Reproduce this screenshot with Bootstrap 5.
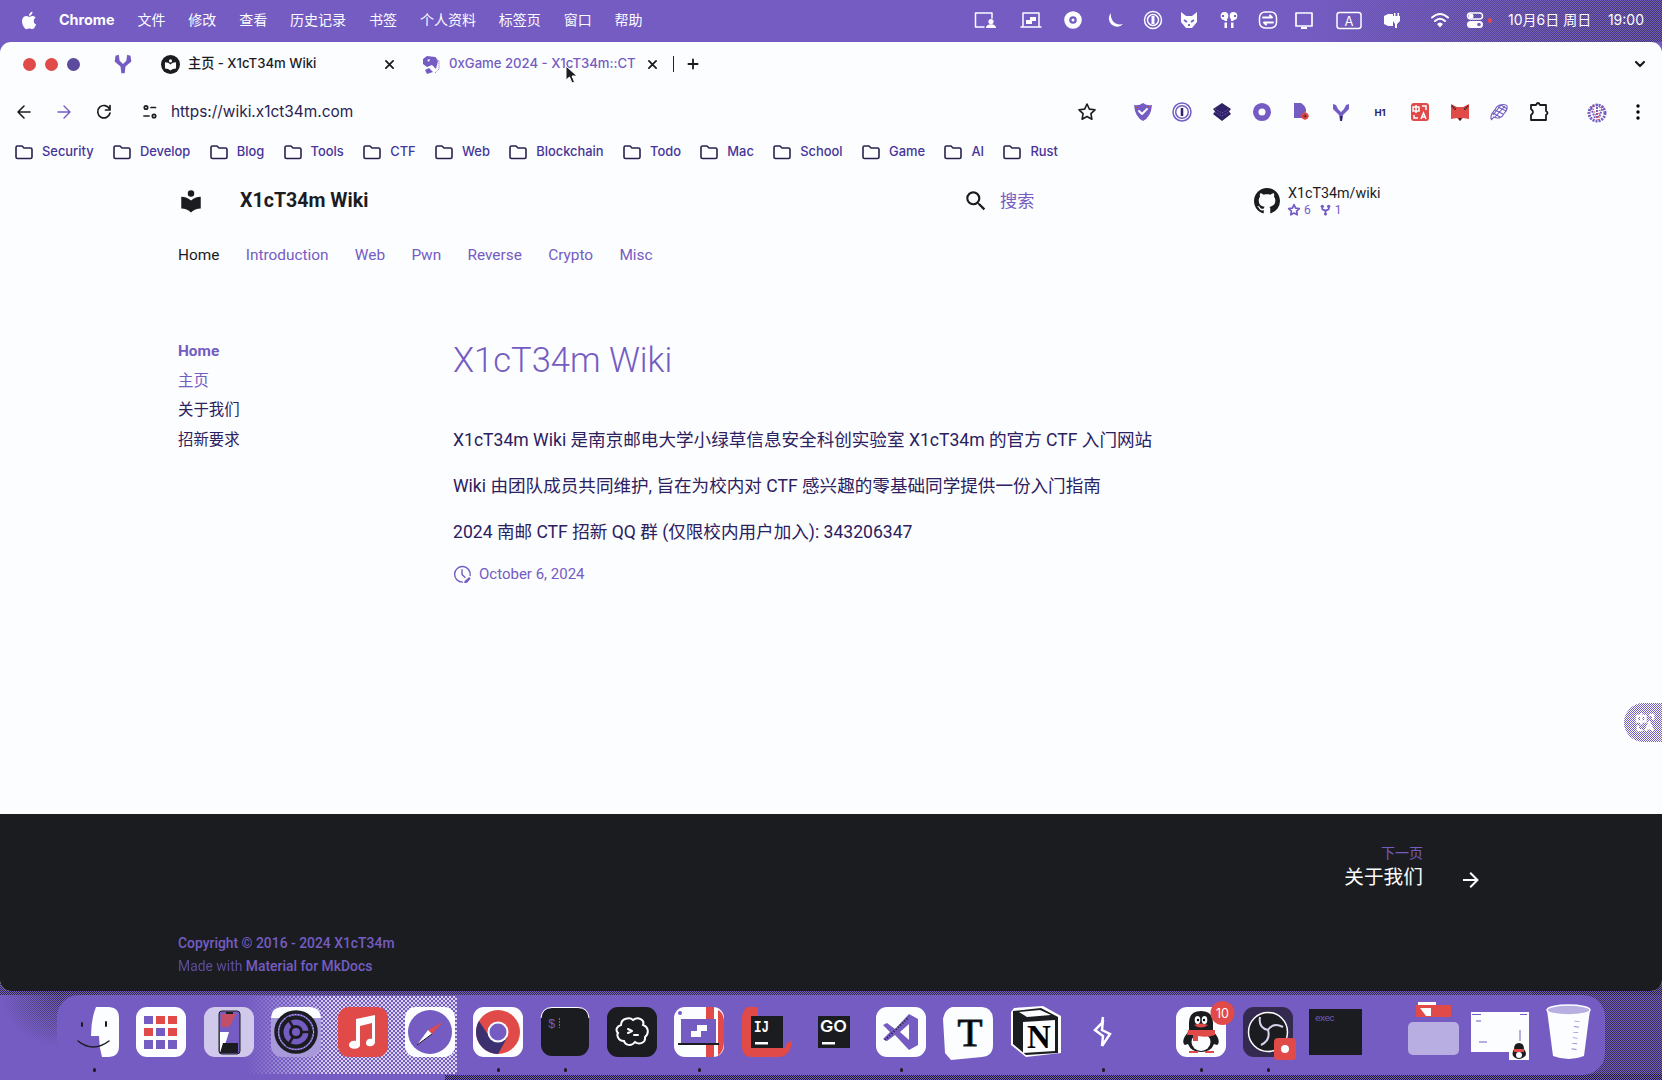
<!DOCTYPE html>
<html lang="zh-CN">
<head>
<meta charset="utf-8">
<meta name="viewport" content="width=device-width, initial-scale=1">
<title>X1cT34m Wiki</title>
<link href="https://cdn.jsdelivr.net/npm/bootstrap@5.3.0/dist/css/bootstrap.min.css" rel="stylesheet">
<style>
:root{--paper:#fcfdff;--violet:#745cc2;--ink:#1b1c1f;--navy:#2f2266;--coral:#e04a48;
 --ui:Inter,"Noto Sans CJK SC",sans-serif;--doc:Roboto,"Noto Sans CJK SC",sans-serif;
 --checker:conic-gradient(var(--ink) 25%,transparent 0 50%,var(--ink) 0 75%,transparent 0)}
body{width:1662px;height:1080px;overflow:hidden;background:var(--violet);color:var(--ink);font-family:var(--ui);line-height:1}
svg{display:block;flex:none;overflow:visible}
a{color:inherit;text-decoration:none}
.ln{fill:none;stroke:currentColor;stroke-width:2;stroke-linecap:round;stroke-linejoin:round}
.desk{height:1080px;position:relative}
.grain{position:absolute;background:var(--checker) 0 0/4px 4px;pointer-events:none}
.grain-top{right:0;top:0;width:440px;height:42px;-webkit-mask:linear-gradient(100deg,transparent 20%,#0009);mask:linear-gradient(100deg,transparent 20%,#0009);background-size:2px 2px}
.grain-strip{left:0;right:0;bottom:85px;height:14px;background-size:2px 2px;opacity:.75}
.grain-left{left:0;top:991px;width:100px;height:62px;background-size:2px 2px;-webkit-mask:radial-gradient(60px 50px at 62px 6px,#000b,transparent);mask:radial-gradient(60px 50px at 62px 6px,#000b,transparent)}
.grain-right{right:0;top:985px;width:130px;height:95px;background-size:2px 2px;opacity:.7}
.grain-base{left:445px;right:0;top:1074px;height:6px;background-size:2px 2px}
/* menu bar */
.menubar{height:42px;color:var(--paper);font-size:14px;padding:0 18px 2px 20px;position:relative}
.menubar .items{gap:22.9px}
.menubar .app{font-weight:700;margin-left:-3px;font-size:14.4px}
.stat{margin-left:1px}
.stat svg{width:24px;height:24px}
.stat :nth-child(2){margin-left:22px}.stat :nth-child(3),.stat :nth-child(4){margin-left:18px}
.stat :nth-child(5){margin-left:14px}.stat :nth-child(6){margin-left:12px}.stat :nth-child(7){margin-left:16px}
.stat :nth-child(8){margin-left:14.5px}.stat :nth-child(9){margin-left:12.5px}.stat :nth-child(10){margin-left:21px}
.stat :nth-child(11){margin-left:19px}.stat :nth-child(12){margin-left:24px}.stat :nth-child(13){margin-left:11px}
.stat svg *{margin:0!important}
.rec{width:4px;height:5px;border-radius:2px;background:var(--coral);margin-left:1px}
.clock{margin-left:16px;width:136px;font-size:14px;white-space:nowrap}
/* browser window */
.win{height:949px;border-radius:11px;overflow:hidden;background:var(--paper);position:relative}
.tabs{height:44px;padding:0 10px 0 23px;font-size:13.15px;font-weight:500}
.lamp{width:13px;height:13px;border-radius:50%;background:var(--coral);margin-right:9px}
.lamp-off{background:#5c4a9d}
.tab1{width:228px}.tab2{width:210px;margin-left:28px;color:var(--violet)}
.tablabel{white-space:nowrap}
.tab2 .tablabel{padding-left:1px}
.bar{height:52px;padding:0 12px 1px}
.url{font-size:15.4px;margin-left:9px;color:#2b2351}
.ext{gap:15.6px}
.face{margin-left:18px}
.marks{height:30px;padding:0 0 2px 15px;gap:19.4px;font-size:12.9px;font-weight:500;color:#46359a}
.marks a{display:flex;align-items:center;gap:9px;white-space:nowrap}
.marks svg{color:#29204d}
.pointer{position:absolute;left:565px;top:23px}
/* wiki page */
.doc{font-family:var(--doc);line-height:1.6}
.head{height:66px;padding-left:178px}
.sitename{font-size:19.6px;font-weight:700;margin-left:36px;width:723px;line-height:1}
.hunt{font-size:17.2px;color:var(--violet);margin-left:11px;width:230px;padding-top:2px}
.repo{font-size:14.3px;line-height:17px}
.facts{font-size:12px;color:var(--violet);gap:9px;line-height:16px}
.sections{height:42px;padding-left:178px;gap:26.3px;font-size:15.4px;color:var(--violet)}
.sections .on{color:var(--ink)}
.cols{height:538px}
.side{width:453px;padding:60px 0 0 178px;font-size:15.4px;color:#2b2060}
.side li{height:29.9px;display:flex;align-items:center}
.cur{color:var(--violet)}
.main{padding-top:55px;font-size:17.58px;color:#2b2060}
.main h1{font-size:34.5px;font-weight:300;color:var(--violet);line-height:46px;margin:6px 0 43px}
.main p{line-height:28px;margin:0 0 18px;white-space:nowrap}
.stamp{font-size:15px;color:var(--violet);gap:7px;line-height:20px}
.foot{background:var(--ink);color:var(--violet);height:177px;padding:26px 179px 0 178px}
.next{height:52px;gap:36px}
.next small{font-size:14px;line-height:24px}
.next strong{font-size:19.7px;font-weight:400;color:var(--paper);line-height:26px}
.next svg{margin-top:27px}
.legal{font-size:13.9px;line-height:22.5px;padding-top:40px}
.fab{position:absolute;right:0;top:661px;width:38px;height:39px;border-radius:20px 0 0 20px;background:conic-gradient(var(--violet) 25%,var(--paper) 0 50%,var(--violet) 0 75%,var(--paper) 0) 0 0/2px 2px}
/* dock */
.dock{position:relative;margin:4px 57px 0;height:80px;border-radius:22px;background:var(--violet);padding:12px 0 0 12px;gap:17.27px}
.dock>*{position:relative}
.dock::before{content:"";position:absolute;left:190px;top:1px;width:210px;height:78px;background:conic-gradient(#fff 25%,transparent 0 50%,#fff 0 75%,transparent 0) 0 0/4px 4px;-webkit-mask:linear-gradient(90deg,transparent,#000b 40%);mask:linear-gradient(90deg,transparent,#000b 40%)}
.gap-after{margin-right:30.5px}
.live::after{content:"";position:absolute;left:24px;top:61px;width:3px;height:4px;border-radius:2px;background:var(--ink)}
svg text{font-family:Inter,sans-serif}
</style>
</head>
<body>
<div class="desk">
<div class="grain grain-top"></div><div class="grain grain-strip"></div><div class="grain grain-left"></div><div class="grain grain-right"></div><div class="grain grain-base"></div>

<nav class="menubar d-flex align-items-center justify-content-between">
 <div class="items d-flex align-items-center">
  <svg width="19" height="19" viewBox="2 1 21 22" fill="currentColor"><path d="M18.71 19.5c-.83 1.24-1.71 2.45-3.05 2.47-1.34.03-1.77-.79-3.29-.79-1.53 0-2 .77-3.27.82-1.31.05-2.3-1.32-3.14-2.53C4.25 17 2.94 12.45 4.7 9.39c.87-1.52 2.43-2.48 4.12-2.51 1.28-.02 2.5.87 3.29.87.78 0 2.26-1.07 3.81-.91.65.03 2.47.26 3.64 1.98-.09.06-2.17 1.28-2.15 3.81.03 3.02 2.65 4.03 2.68 4.04-.03.07-.42 1.44-1.38 2.83M13 3.5c.73-.83 1.94-1.46 2.94-1.5.13 1.17-.34 2.35-1.04 3.19-.69.85-1.83 1.51-2.95 1.42-.15-1.15.41-2.35 1.05-3.11z"/></svg>
  <span class="app">Chrome</span><span>文件</span><span>修改</span><span>查看</span><span>历史记录</span><span>书签</span><span>个人资料</span><span>标签页</span><span>窗口</span><span>帮助</span>
 </div>
 <div class="d-flex align-items-center">
  <div class="stat d-flex align-items-center">
   <svg viewBox="0 0 24 24"><path class="ln" style="stroke-width:1.5" d="M11 19H2.500V5H19v5"/><circle cx="18" cy="13.500" r="2.600" fill="currentColor"/><path fill="currentColor" d="M13 20c0-5 10-5 10 0z"/></svg>
   <svg viewBox="0 0 24 24"><path class="ln" style="stroke-width:1.5" d="M4 18V5h16v13M2 19h20"/><path fill="currentColor" d="M7 16v-4h4V9h6v4h-4v3z"/></svg>
   <svg viewBox="0 0 24 24"><circle cx="12" cy="12" r="6.300" fill="none" stroke="currentColor" stroke-width="5"/><circle cx="12" cy="12" r="1.500" fill="currentColor"/></svg>
   <svg viewBox="0 0 24 24"><path fill="currentColor" d="M8 5a8 8 0 1 0 12 11C12 18 7 12 8 5z"/></svg>
   <svg viewBox="0 0 24 24" fill="none" stroke="currentColor" stroke-width="1.500"><circle cx="12" cy="12" r="8.500"/><circle cx="12" cy="12" r="5.500"/><path stroke-width="3" d="M12 8v8"/></svg>
   <svg viewBox="0 0 24 24"><path fill="currentColor" d="M4 4l5 4h6l5-4v10l-5 6H9l-5-6z"/><path stroke="#745cc2" stroke-width="1.800" d="M7 12l3 2m7-2-3 2m-2 2v2"/></svg>
   <svg viewBox="0 0 24 24" fill="currentColor"><ellipse cx="7.500" cy="8" rx="3.800" ry="4"/><ellipse cx="16.500" cy="8" rx="3.800" ry="4"/><path d="M7.500 10h2.500v10H7.500zM14 10h2.500v10H14z"/><path fill="#745cc2" d="M5 7h2v2H5zM17 7h2v2h-2zM7 13h3v1.500H7zM14 13h3v1.500h-3z"/></svg>
   <svg viewBox="0 0 24 24" class="ln"><rect x="3.500" y="4" width="17" height="16" rx="5.500" stroke-width="1.500"/><path d="M7 9.500h9l-2-2M17 14.500H8l2 2"/></svg>
   <svg viewBox="0 0 24 24"><path class="ln" style="stroke-width:1.7" d="M4 5h16v13H4z"/><path fill="currentColor" d="M9 19h6v2H9z"/></svg>
   <svg viewBox="0 0 24 24"><rect x="0" y="4.500" width="24" height="16" rx="2.500" fill="none" stroke="currentColor" stroke-width="1.500"/><text x="12" y="17.500" font-size="13" text-anchor="middle" fill="currentColor">A</text></svg>
   <svg viewBox="0 0 24 24" fill="currentColor"><path d="M4 8l4-2v12l-4-2zM8 6h5v12H8z"/><path d="M14 5h1.500v3h2V5H19v3h1v5l-3 3v4h-2v-4l-2-3V8h1z"/></svg>
   <svg viewBox="0 0 24 24"><path class="ln" d="M4 9.500q8-7 16 0M7 13q5-4.500 10 0"/><path fill="currentColor" d="M9 16q3-3 6 0l-3 3.500z"/></svg>
   <svg viewBox="0 0 24 24"><rect x="4.500" y="5" width="15" height="6" rx="3" fill="none" stroke="currentColor" stroke-width="1.500"/><circle cx="8" cy="8" r="2.500" fill="currentColor"/><rect x="4" y="13" width="16" height="7" rx="3.500" fill="currentColor"/><circle cx="16" cy="16.500" r="1.800" fill="#745cc2"/></svg>
  </div>
  <i class="rec"></i>
  <div class="clock d-flex justify-content-between"><span>10月6日 周日</span><span>19:00</span></div>
 </div>
</nav>

<main class="win">
 <div class="tabs d-flex align-items-center">
  <i class="lamp"></i><i class="lamp"></i><i class="lamp lamp-off"></i>
  <svg class="ms-4" width="20" height="20" viewBox="0 0 24 24"><path fill="#745cc2" d="M3 2l4-1 1 7 4 4 4-4 1-7 4 1 1 7-7 6-1 8h-4l-1-8-7-6z"/></svg>
  <div class="tab1 d-flex align-items-center ms-4 ps-1">
   <svg width="19" height="19" viewBox="0 0 24 24"><circle cx="12" cy="12" r="12" fill="#1b1c1f"/><circle cx="12" cy="7.500" r="2" fill="#fcfdff"/><path fill="#fcfdff" d="M5 9c3 0 5 1 7 3 2-2 4-3 7-3v8c-3 0-5 1-7 2.500C10 18 8 17 5 17z"/></svg>
   <span class="tablabel ms-2">主页 - X1cT34m Wiki</span>
  </div>
  <svg width="9" height="9" viewBox="0 0 10 10" class="ln"><path d="M1 1l8 8M9 1L1 9"/></svg>
  <div class="tab2 d-flex align-items-center">
   <svg width="18" height="19" viewBox="0 0 18 19"><path fill="#745cc2" d="M1 4l4-3 8 1 3 4-2 8-4-4-5 2-4-3zM3 15l4-2 4 4-6 2z"/><path fill="none" stroke="#745cc2" stroke-dasharray="1 1" d="M13 2l4 4v8l-4 4"/><path fill="#fcfdff" d="M5 5l3-1-1 3z"/></svg>
   <span class="tablabel ms-2">0xGame 2024 - X1cT34m::CT</span>
  </div>
  <svg class="ms-3" width="9" height="9" viewBox="0 0 10 10"><path class="ln" d="M1 1l8 8M9 1L1 9"/></svg>
  <span class="ms-3 border-start border-dark" style="height:16px"></span>
  <svg class="ms-2" width="22" height="24" viewBox="0 0 24 24"><path class="ln" stroke="#2f2266" d="M7 12h10M12 7v10"/></svg>
  <svg class="ms-auto" width="24" height="24" viewBox="0 0 24 24"><path class="ln" style="stroke-width:2.200" d="M8 10l4 4 4-4"/></svg>
  <svg class="pointer" width="13" height="20" viewBox="0 0 13 20"><path fill="#1b1c1f" stroke="#fcfdff" d="M1 1v14l3.500-3 2.500 6 2.500-1-2.500-6h5z"/></svg>
 </div>
 <div class="bar d-flex align-items-center">
  <svg width="24" height="24" viewBox="0 0 24 24"><path class="ln" style="stroke-width:1.600" d="M18 12H6.500M12 6l-6 6 6 6"/></svg>
  <svg class="ms-3" width="24" height="24" viewBox="0 0 24 24" color="#745cc2"><path class="ln" style="stroke-width:1.400" d="M6 12h12M12 6l6 6-6 6"/></svg>
  <svg class="ms-3" width="24" height="24" viewBox="0 0 24 24"><path class="ln" style="stroke-width:1.700" d="M17.500 9A6.200 6.200 0 1 0 18 13M18 5.500V10h-4.500"/></svg>
  <svg style="margin-left:22px" width="24" height="24" viewBox="0 0 24 24"><path class="ln" style="stroke-width:1.700" d="M13 7.500h4.500M6 16h5"/><circle class="ln" style="stroke-width:1.700" cx="8" cy="7.500" r="1.700"/><circle class="ln" style="stroke-width:1.700" cx="16" cy="16" r="1.700"/></svg>
  <span class="url">https://wiki.x1ct34m.com</span>
  <div class="ext d-flex align-items-center ms-auto">
   <svg class="me-3 " width="24" height="24" viewBox="0 0 24 24"><path class="ln" style="stroke-width:1.600" d="M12 4l2.400 5.100 5.600.7-4.100 3.900 1 5.500-4.900-2.700-4.900 2.700 1-5.500L4 9.800l5.600-.7z"/></svg>
   <svg width="24" height="24" viewBox="0 0 24 24"><path fill="#745cc2" d="M3 5q5 1 9-2 4 3 9 2-1 12-9 16Q4 17 3 5z"/><path d="M5 8l2-2m10 0 2 2" stroke="#e04a48"/><path class="ln" color="#fcfdff" d="M8 11l3 3 5-5"/></svg>
   <svg width="24" height="24" viewBox="0 0 24 24" fill="none" stroke="#745cc2"><circle cx="12" cy="12" r="9" stroke-width="1.500"/><circle cx="12" cy="12" r="6.300" stroke-width="1.500"/><path stroke="#2f2266" stroke-width="2.500" d="M12 8v8"/></svg>
   <svg width="24" height="24" viewBox="0 0 24 24"><path fill="#2f2266" d="M12 3l9 6-2 2.500 2 2.500-9 7-9-7 2-2.500L3 9z"/><path stroke="#745cc2" fill="none" stroke-dasharray="1 1" d="M5 12l7 4 7-4M5 9l7 4 7-4"/></svg>
   <svg width="24" height="24" viewBox="0 0 24 24"><circle cx="12" cy="12" r="6.300" fill="none" stroke="#745cc2" stroke-width="5.500"/></svg>
   <svg width="24" height="24" viewBox="0 0 24 24"><path fill="#745cc2" d="M5 3h7q5 3 5 8l-2 7H5z"/><circle cx="16" cy="16" r="3.500" fill="#e04a48"/><circle cx="16" cy="16" r="1.500" fill="#1b1c1f"/><path stroke="#e04a48" stroke-dasharray="1 1" d="M11 16h10M16 11v10"/></svg>
   <svg width="24" height="24" viewBox="0 0 24 24"><path fill="#745cc2" d="M4 4l3 1 2 4 3 3 3-3 2-4 3-1v5l-6 6-1 6h-2l-1-6-6-6z"/><path fill="#2f2266" d="M11 16h2.500l-.5 5h-1.500z"/></svg>
   <svg width="24" height="24" viewBox="0 0 24 24"><text x="12" y="16" font-size="9.500" font-weight="700" text-anchor="middle" fill="#2f2266">H1</text></svg>
   <svg width="24" height="24" viewBox="0 0 24 24"><rect x="3" y="3" width="18" height="18" rx="3" fill="#e04a48"/><path stroke="#fcfdff" stroke-width="1.500" fill="none" d="M5 7h6v4H5zM8 5v8M14 6h4v4M6 15v3h4M13 19l2.500-6 2.500 6M14 17h3"/></svg>
   <svg width="24" height="24" viewBox="0 0 24 24"><path fill="#e04a48" d="M3 4l6 3h6l6-3v15l-6-1-3 3-3-3-6 1z"/><path stroke="#1b1c1f" stroke-dasharray="1 1" stroke-width="2" d="M4 6l4 4M20 6l-4 4"/><path fill="#1b1c1f" d="M10.500 18h3l-1.500 3z"/></svg>
   <svg width="24" height="24" viewBox="0 0 24 24" fill="none" stroke="#745cc2" stroke-width="1.100"><path d="M4 19c-1-6 4-8 5-11s9-5 11-2c1 6-3 6-4 9s-6 4-9 2l-3 3M6 13l7 4M8 10l8 4M11 7l8 4M14 5l6 4M8 17l10-11M6 15L14 5"/></svg>
   <svg width="24" height="24" viewBox="0 0 24 24"><path class="ln" style="stroke-width:1.800" d="M4 5h5q2-4 4 0h6v6q3 2 0 4v5H4v-5q4-3 0-6z"/></svg>
   <svg class="face" width="26" height="24" viewBox="0 0 24 24"><circle cx="12" cy="13" r="8" fill="none" stroke="#745cc2" stroke-width="3" stroke-dasharray="2 1"/><path stroke="#745cc2" stroke-width="2" stroke-dasharray="2 1" d="M6 8l4 10M12 4v14M18 6l-4 12"/><path stroke="#e04a48" stroke-width="1.500" stroke-dasharray="1 2" d="M7 6l5 12M15 7l-2 13"/></svg>
   <svg width="24" height="24" viewBox="0 0 24 24"><circle cx="12" cy="6" r="1.700"/><circle cx="12" cy="12" r="1.700"/><circle cx="12" cy="18" r="1.700"/></svg>
  </div>
 </div>
 <svg width="0" height="0" class="position-absolute"><symbol id="dir" viewBox="0 0 18 15"><path fill="none" stroke="currentColor" stroke-width="1.600" stroke-linejoin="round" d="M1 2.500V12q0 1.500 1.500 1.500h13q1.500 0 1.500-1.500V4.500Q17 3 15.500 3H9L7 1H2.500Q1 1 1 2.500z"/></symbol></svg>
 <div class="marks d-flex align-items-center">
  <a href="#"><svg width="18" height="15"><use href="#dir"/></svg>Security</a><a href="#"><svg width="18" height="15"><use href="#dir"/></svg>Develop</a><a href="#"><svg width="18" height="15"><use href="#dir"/></svg>Blog</a><a href="#"><svg width="18" height="15"><use href="#dir"/></svg>Tools</a><a href="#"><svg width="18" height="15"><use href="#dir"/></svg>CTF</a><a href="#"><svg width="18" height="15"><use href="#dir"/></svg>Web</a><a href="#"><svg width="18" height="15"><use href="#dir"/></svg>Blockchain</a><a href="#"><svg width="18" height="15"><use href="#dir"/></svg>Todo</a><a href="#"><svg width="18" height="15"><use href="#dir"/></svg>Mac</a><a href="#"><svg width="18" height="15"><use href="#dir"/></svg>School</a><a href="#"><svg width="18" height="15"><use href="#dir"/></svg>Game</a><a href="#"><svg width="18" height="15"><use href="#dir"/></svg>AI</a><a href="#"><svg width="18" height="15"><use href="#dir"/></svg>Rust</a>
 </div>

 <div class="doc">
  <header class="head d-flex align-items-center">
   <svg width="26" height="26" viewBox="0 0 24 24" fill="#1b1c1f"><path d="M12 8a3 3 0 0 0 3-3 3 3 0 0 0-3-3 3 3 0 0 0-3 3 3 3 0 0 0 3 3m0 3.540C9.640 9.350 6.500 8 3 8v11c3.500 0 6.640 1.350 9 3.540 2.360-2.190 5.500-3.540 9-3.540V8c-3.500 0-6.640 1.350-9 3.540z"/></svg>
   <div class="sitename">X1cT34m Wiki</div>
   <svg width="26" height="26" viewBox="0 0 24 24" fill="#1b1c1f"><path d="M9.500 3A6.500 6.500 0 0 1 16 9.500c0 1.610-.59 3.090-1.560 4.230l.27.27h.79l5 5-1.500 1.500-5-5v-.79l-.27-.27A6.516 6.516 0 0 1 9.500 16 6.500 6.500 0 0 1 3 9.500 6.500 6.500 0 0 1 9.500 3m0 2C7 5 5 7 5 9.500S7 14 9.500 14 14 12 14 9.500 12 5 9.500 5z"/></svg>
   <div class="hunt">搜索</div>
   <svg class="ms-4" width="26" height="26" viewBox="0 0 16 16" fill="#1b1c1f"><path d="M8 0C3.580 0 0 3.580 0 8c0 3.540 2.290 6.530 5.470 7.590.4.070.55-.17.55-.38 0-.19-.01-.82-.01-1.490-2.010.37-2.530-.49-2.690-.94-.09-.23-.48-.94-.82-1.130-.28-.15-.68-.52-.01-.53.63-.01 1.080.58 1.230.82.72 1.210 1.870.87 2.330.66.07-.52.28-.87.51-1.070-1.780-.2-3.640-.89-3.640-3.950 0-.87.31-1.590.82-2.150-.08-.2-.36-1.020.08-2.120 0 0 .67-.21 2.200.82.64-.18 1.320-.27 2-.27.68 0 1.360.09 2 .27 1.530-1.040 2.200-.82 2.200-.82.44 1.100.16 1.920.08 2.120.51.56.82 1.270.82 2.150 0 3.070-1.870 3.750-3.650 3.950.29.25.54.73.54 1.480 0 1.070-.01 1.930-.01 2.200 0 .21.15.46.55.38A8.013 8.013 0 0 0 16 8c0-4.420-3.580-8-8-8z"/></svg>
   <div class="repo ms-2">X1cT34m/wiki
    <div class="facts d-flex">
     <span class="d-flex align-items-center"><svg class="me-1" width="12" height="12" viewBox="3 3 18 18"><path class="ln" style="stroke-width:2.500" d="M12 4l2.400 5.100 5.600.7-4.100 3.900 1 5.500-4.900-2.700-4.900 2.700 1-5.500L4 9.800l5.600-.7z"/></svg>6</span>
     <span class="d-flex align-items-center"><svg class="me-1" width="11" height="12" viewBox="0 0 12 12"><path class="ln" d="M2.500 3v2L6 7l3.500-2V3M6 7v3"/><circle cx="2.500" cy="2" r="1.800" fill="currentColor"/><circle cx="9.500" cy="2" r="1.800" fill="currentColor"/><circle cx="6" cy="10.500" r="1.500" fill="currentColor"/></svg>1</span>
    </div>
   </div>
  </header>
  <nav class="sections d-flex align-items-center"><a class="on" href="#">Home</a><a href="#">Introduction</a><a href="#">Web</a><a href="#">Pwn</a><a href="#">Reverse</a><a href="#">Crypto</a><a href="#">Misc</a></nav>
  <div class="cols d-flex">
   <ul class="side list-unstyled mb-0"><li class="cur fw-bold">Home</li><li class="cur">主页</li><li>关于我们</li><li>招新要求</li></ul>
   <article class="main">
    <h1>X1cT34m Wiki</h1>
    <p>X1cT34m Wiki 是南京邮电大学小绿草信息安全科创实验室 X1cT34m 的官方 CTF 入门网站</p>
    <p>Wiki 由团队成员共同维护, 旨在为校内对 CTF 感兴趣的零基础同学提供一份入门指南</p>
    <p>2024 南邮 CTF 招新 QQ 群 (仅限校内用户加入): 343206347</p>
    <div class="stamp d-flex align-items-center"><svg width="19" height="19" viewBox="0 0 20 20"><path class="ln" style="stroke-width:1.500" d="M10 18A8.200 8.200 0 1 1 18 11M9.500 5v5l3 3"/><path fill="currentColor" d="M12 19v-2l5-4.500 1.500 2-4 4.500z"/></svg>October 6, 2024</div>
   </article>
  </div>
  <footer class="foot">
   <div class="next d-flex justify-content-end align-items-center">
    <div class="d-flex flex-column align-items-end"><small>下一页</small><strong>关于我们</strong></div>
    <svg width="24" height="24" viewBox="0 0 24 24"><path fill="#fcfdff" d="M4 11v2h12l-5.500 5.500 1.420 1.420L19.840 12l-7.920-7.920L10.500 5.500 16 11H4z"/></svg>
   </div>
   <div class="legal"><div class="fw-medium">Copyright © 2016 - 2024 X1cT34m</div><div><span class="opacity-75">Made with</span> <a class="fw-medium" href="#">Material for MkDocs</a></div></div>
  </footer>
 </div>
 <div class="fab d-flex align-items-center ps-2"><svg class="ms-1" width="19" height="19" viewBox="0 0 20 20"><path fill="none" stroke="#fcfdff" stroke-width="2.500" d="M1 3h9v6H1zM5.500 0v12M14 2h4v5M2 13v5h5M10 19l4-9 4 9M11 16h6"/></svg></div>
</main>

<div class="dock d-flex align-items-start">
 <div class="live"><svg width="50" height="50"><path fill="#fcfdff" d="M27 0h12q11 0 11 11v28q0 11-11 11h-6q-3-10-3-21h-8q0-17 5-29z"/><path d="M13 16v3M37 15v4" class="ln"/><path d="M9 34q15 12 31 0" class="ln" style="stroke-width:1.500"/></svg></div>
 <div><svg width="50" height="50"><rect width="50" height="50" rx="11" fill="#fcfdff"/><g fill="#745cc2"><path d="M8 9h9v8H8zM20 21h9v8h-9zM8 33h9v9H8zM20 33h9v9h-9zM32 33h9v9h-9z"/><path fill="#e04a48" d="M20 9h9v8h-9zM32 9h9v8h-9zM8 21h9v8H8zM32 21h9v8h-9z"/></g></svg></div>
 <div><svg width="50" height="50"><rect width="50" height="50" rx="11" fill="#fcfdff" opacity=".68"/><rect x="15" y="4" width="21" height="43" rx="3" fill="#745cc2" stroke="#1b1c1f"/><path fill="#e04a48" opacity=".75" d="M17 7h15l-7 13h-8z"/><path fill="#fcfdff" d="M16 25h9l-6 19-3 2z"/><path fill="#1b1c1f" d="M22 5h7v2h-7zM19 36h15v10H16z"/></svg></div>
 <div><svg width="50" height="50"><rect width="50" height="50" rx="11" fill="#a799da"/><path fill="#fcfdff" d="M11 0h28q10 0 11 11H0Q1 0 11 0z"/><g fill="none" stroke="#1b1c1f"><circle cx="25" cy="25" r="20" stroke-width="3.500" fill="#745cc2"/><circle cx="25" cy="25" r="14.500" stroke-width="4"/><circle cx="25" cy="25" r="5.500" stroke-width="3"/><path stroke-width="2.500" d="M30 25h12M22 20L16 10M22 30l-6 10"/></g><circle cx="25" cy="25" r="17.500" fill="none" stroke="#d5cdf0" stroke-dasharray="1 2"/></svg></div>
 <div><svg width="50" height="50"><rect width="50" height="50" rx="11" fill="#e04a48"/><path fill="#fcfdff" d="M18 12l19-4v27c0 5-9 6-9 1 0-4 4-5 6-4V16l-12 3v19c0 5-11 5-11 0 0-4 5-5 7-4z"/></svg></div>
 <div><svg width="50" height="50"><rect width="50" height="50" rx="11" fill="#fcfdff"/><circle cx="25" cy="25" r="22" fill="#745cc2"/><path d="M38 15L23 23l4 4z" fill="#e04a48"/><path d="M12 38l11-15 4 4z" fill="#fcfdff"/><path d="M12 38l15-11" stroke="#1b1c1f"/></svg></div>
 <div class="live"><svg width="50" height="50"><rect width="50" height="50" rx="11" fill="#fcfdff"/><circle cx="25" cy="25" r="22" fill="#e04a48"/><path fill="#3c3071" d="M6 14A22 22 0 0 0 25 47l9-16-18-2z"/><circle cx="25" cy="25" r="10.500" fill="#fcfdff"/><circle cx="25" cy="25" r="8.500" fill="#745cc2"/></svg></div>
 <div class="live"><svg width="50" height="50"><rect x="1" y="1" width="48" height="48" rx="11" fill="#1b1c1f"/><path d="M1 11Q2 .5 12 .5h26Q48 .5 49 11" stroke="#fcfdff" fill="none"/><text x="8" y="21" font-size="12.500" fill="#745cc2" style="font-family:'Liberation Mono'">$</text><path d="M19.500 11v10" stroke="#745cc2" stroke-dasharray="2 1"/></svg></div>
 <div><svg width="50" height="50"><rect width="50" height="50" rx="11" fill="#1b1c1f"/><path fill="none" stroke="#fcfdff" stroke-width="2" d="M14 18c0-7 9-8 12-5 5-4 12 0 10 5 6 2 6 9 2 12 1 6-6 8-10 5-4 5-10 3-11-1-7 0-7-7-6-8-3-3-1-7 3-8z"/><path class="ln" color="#fcfdff" d="M21 22l4 2-4 2M27 28h4"/></svg></div>
 <div class="live"><svg width="50" height="50"><rect width="50" height="50" rx="11" fill="#fcfdff"/><path fill="#e04a48" d="M32 0h8v12h-8zM32 38h8v12h-8zM44 3q6 3 6 12v20q0 9-6 14z"/><path fill="#745cc2" d="M7 12h35v25H7z"/><path fill="#1b1c1f" d="M4 36h41v2H4z"/><circle cx="6" cy="6" r="2" fill="#745cc2"/><path fill="#fcfdff" d="M17 24h6v-6h10v6h-6v6H17z"/></svg></div>
 <div><svg width="50" height="50"><path fill="#e04a48" d="M5 0h11v9H33v32h10q1-6 7-7-1 14-12 16H10Q0 50 0 40V12Q0 4 5 0z"/><path fill="#1b1c1f" d="M9 9h32v32H9z"/><text x="12" y="25" font-size="16" font-weight="700" fill="#fcfdff" style="font-family:'Liberation Mono'" textLength="15" lengthAdjust="spacingAndGlyphs">IJ</text><path fill="#fcfdff" d="M13 35h13v2.500H13z"/></svg></div>
 <div><svg width="50" height="50"><path fill="#1b1c1f" d="M9 9h32v32H9z"/><text x="11" y="25" font-size="16" font-weight="600" fill="#fcfdff" textLength="27" lengthAdjust="spacingAndGlyphs">GO</text><path fill="#fcfdff" d="M13 35h13v2.500H13z"/></svg></div>
 <div class="live"><svg width="50" height="50"><rect width="50" height="50" rx="11" fill="#fcfdff"/><path fill="#745cc2" fill-rule="evenodd" d="M7 18l4-2 8 6L33 7l9 5v26l-9 5-14-15-8 6-4-2 7-7zM33 17l-9 8 9 8z"/><path d="M9 33L33 10" stroke="#1b1c1f" stroke-width="2" stroke-dasharray="1 2"/></svg></div>
 <div><svg width="50" height="50"><path fill="#fcfdff" d="M9 0h30q11 1 11 13v25q0 11-11 12l-31 3-6-7-2-34Q2 2 9 0z"/><text x="27" y="38.500" font-size="41" text-anchor="middle" style="font-family:'Liberation Serif'" stroke="#1b1c1f" textLength="25" lengthAdjust="spacingAndGlyphs">T</text></svg></div>
 <div><svg width="50" height="50"><path fill="#fcfdff" d="M3 1l29-2 18 10v37l-35 4L0 38V5z"/><path fill="#1b1c1f" d="M2 4l28-3 17 9v36l-32 2L2 37z"/><path fill="#fcfdff" d="M8 5l21-2 11 5-24 2zM12 15l32-2v31l-32 2z"/><text x="28" y="40.500" font-size="33" font-weight="700" text-anchor="middle" style="font-family:'Liberation Serif'">N</text></svg></div>
 <div class="live gap-after"><svg width="50" height="50"><path fill="none" stroke="#fcfdff" stroke-width="2.500" d="M25 10l-1 6-7 7 8 6-1 10M24 39l8-12-8-4 1-10"/></svg></div>
 <div class="live"><svg width="50" height="50"><rect width="50" height="50" rx="11" fill="#fcfdff"/><path fill="#1b1c1f" d="M13 16q0-12 12-12t12 12v8q9 10 4 14l-3-1q-3 8-13 8t-13-8l-3 1q-5-4 4-14z"/><ellipse cx="25" cy="35" rx="9.500" ry="9" fill="#fcfdff"/><path fill="#e04a48" d="M12 23h27v5q-7 3-17 1v5h-5v-6h-6zM18 18q7-3 14 0-7 5-14 0zM13 44h9v2h-9zM29 44h9v2h-9z"/><g fill="#fcfdff"><ellipse cx="21.500" cy="13" rx="2.800" ry="4"/><ellipse cx="28.500" cy="13" rx="2.800" ry="4"/></g><circle cx="22" cy="13" r="1.200"/><circle cx="28" cy="13" r="1.200"/><circle cx="46.500" cy="6" r="12" fill="#e04a48"/><text x="46.500" y="10.500" font-size="12.500" text-anchor="middle" fill="#fcfdff">10</text></svg></div>
 <div class="live"><svg width="50" height="50"><rect width="50" height="50" rx="11" fill="#34294f"/><circle cx="25" cy="25" r="19.500" fill="#1b1c1f" stroke="#fcfdff" stroke-width="1.500"/><path fill="none" stroke="#d9d2ef" stroke-width="2" d="M25 23q-10-2-8-13M25 23q5-8 15-3M25 23q3 10-7 15"/><rect x="31" y="31" width="22" height="22" rx="4" fill="#e04a48"/><circle cx="42" cy="42" r="4" fill="#fcfdff"/></svg></div>
 <div class="gap-after"><svg width="50" height="50"><path fill="#1b1c1f" d="M-1 2h53v46H-1z"/><text x="5" y="13.500" font-size="9.500" fill="#745cc2" style="font-family:'Liberation Mono'" textLength="20">exec</text></svg></div>
 <div><svg width="50" height="50"><rect y="15" width="51" height="33" rx="5" fill="#b9aee2"/><path fill="#e04a48" d="M8-2h35v12H8z"/><path fill="#fcfdff" d="M10-5h18v3H10zM12 1h11v8h-5z"/></svg></div>
 <div><svg width="50" height="50"><path fill="#fcfdff" d="M-4 5h58v40H-4z"/><path stroke="#745cc2" d="M-3 7.500h9M45 7.500h7M1 14h5M45 23v11M4 35h8"/><path fill="#fcfdff" d="M34 38h20v15H34z"/><path fill="#1b1c1f" d="M39 42q0-6 5-6t5 6q4 6 0 8-5 4-10 0-3-3 0-8z"/><path fill="#e04a48" d="M39 42h10v3H39z"/><circle cx="44" cy="48" r="3" fill="#fcfdff"/></svg></div>
 <div><svg width="50" height="50"><path fill="#fcfdff" d="M4 3h43l-6 46q-15 6-31 0z"/><ellipse cx="25.500" cy="3" rx="21.500" ry="5" fill="#b9aee2" stroke="#fcfdff" stroke-width="1.500"/><path stroke="#745cc2" stroke-width="5" stroke-dasharray=".6 5" d="M34 14l-3 29"/></svg></div>
</div>
</div>
<script src="https://cdn.jsdelivr.net/npm/bootstrap@5.3.0/dist/js/bootstrap.bundle.min.js"></script>
</body>
</html>
